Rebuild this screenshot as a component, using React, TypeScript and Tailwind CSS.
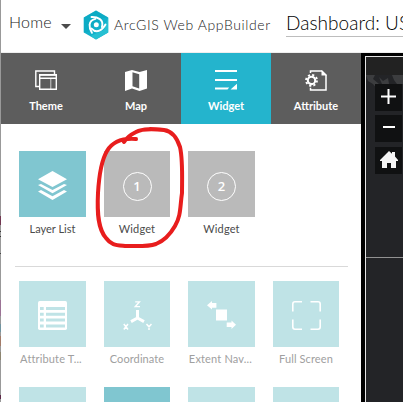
import React from 'react';

const Logo = () => (
  <svg width="26" height="30" viewBox="0 0 26 30" className="block">
    <path d="M13 0.6 25.2 7.5V22.5L13 29.4.8 22.5V7.5Z" fill="#12b1cb" />
    <path d="M25.2 7.5V22.5L13 29.4 7.5 26 21 20Z" fill="#27c0d2" />
    <path d="M.8 7.5 13 .6 25.2 7.5 20 8 5 22 .8 22.5Z" fill="#08a6bf" opacity=".55" />
    <g fill="none" stroke="#fff" strokeWidth="1.9" strokeLinecap="round">
      <path d="M8.5 7C14.5 6.8 21.3 9.5 18.9 17" />
      <path d="M8.5 7C14.5 6.8 21.3 9.5 18.9 17" transform="rotate(120 13.3 14.8)" />
      <path d="M8.5 7C14.5 6.8 21.3 9.5 18.9 17" transform="rotate(240 13.3 14.8)" />
    </g>
    <circle cx="13.3" cy="14.8" r="2.5" fill="#fff" />
  </svg>
);

const ThemeIcon = () => (
  <svg width="22" height="20" viewBox="0 0 22 20" fill="none" stroke="#fff">
    <path d="M4 16.5H.8V1H19.5V4" strokeWidth="1.4" />
    <path d="M4.7 4.7H21.3V19.3H4.7Z" strokeWidth="1.4" />
    <path d="M4 5H22M5 8.2H21" strokeWidth="1.5" />
    <path d="M15.8 9V19" strokeWidth="1" opacity=".7" />
  </svg>
);

const MapIcon = () => (
  <svg width="22" height="21" viewBox="0 0 22 21">
    <path d="M0 2 7 0 14.5 2 22 0V18.5L14.5 21 7 18.5 0 21Z" fill="#fff" />
    <path d="M7.5 2.3 14.2 4.3V18.6L7.5 16.2Z" fill="#5d5d5d" />
  </svg>
);

const WidgetIcon = () => (
  <svg width="22" height="20" viewBox="0 0 22 20" fill="#fff">
    <path d="M0 0H22V2H0ZM0 9H22V11H0ZM0 17.5H14.2L12.5 19.5H0ZM15.5 19.5 22 13.8V19.5Z" />
  </svg>
);

const AttributeIcon = () => (
  <svg width="22" height="21" viewBox="0 0 22 21">
    <path d="M5.5 3V1H16.8L21 5V20H5.5V17.8" fill="none" stroke="#fff" strokeWidth="1.5" />
    <path d="M16.5 0 22 5.4H16.5Z" fill="#fff" />
    <circle cx="6.5" cy="10.4" r="3.7" fill="none" stroke="#fff" strokeWidth="2.1" />
    <circle cx="6.5" cy="10.4" r="5.5" fill="none" stroke="#fff" strokeWidth="1.8" strokeDasharray="2.15 2.17" />
  </svg>
);

const LayersIcon = () => (
  <svg width="29" height="29" viewBox="0 0 29 29" fill="#fff">
    <path d="M14.5 0 29 8.3 14.5 16 0 8.3ZM0 14 3 12.9 14.5 19 26 12.9 29 14 14.5 22.3ZM0 20.5 3 19 14.5 25.2 26 19 29 20.5 14.5 29Z" />
  </svg>
);

const TableIcon = () => (
  <svg width="29" height="29" viewBox="0 0 29 29">
    <rect width="29" height="29" rx="1.7" fill="#fff" />
    <g fill="none" stroke="#bfe3e6" strokeWidth="3" strokeDasharray="3.7 2.3 19 9">
      <path d="M2 7.5H27" />
      <path d="M2 13.3H27" />
      <path d="M2 19.1H27" />
      <path d="M2 24.9H27" />
    </g>
  </svg>
);

const AxesIcon = () => (
  <svg width="29" height="29" viewBox="0 0 29 29" fill="none" stroke="#fff">
    <path d="M14.5 9V17M14.5 17 8 20.6M14.5 17 21 20.6" strokeWidth="3" />
    <path d="M12.2.8H16.5L12.2 5.7H17" strokeWidth="1.3" />
    <path d="M.8 23 5 28.5M5 23 .8 28.5M23.5 23 26 25.8 28.5 23M26 25.5V29" strokeWidth="1.5" />
  </svg>
);

const ExtentIcon = () => (
  <svg width="29" height="28" viewBox="0 0 29 28" fill="#fff">
    <path d="M9 8.6H20V19.6H9ZM0 4.3 5 0V2.1H9.4V6.7H5V8.6ZM29 23.8 24.5 19.5V21.6H19.7V26H24.5V28Z" />
  </svg>
);

const FullIcon = () => (
  <svg width="29" height="29" viewBox="0 0 29 29" fill="none" stroke="#fff" strokeWidth="1.6">
    <path d="M.8 10.5V3Q.8.8 3 .8H10M18.5.8H26Q28.2.8 28.2 3V10.5M28.2 18.5V26Q28.2 28.2 26 28.2H18.5M10 28.2H3Q.8 28.2.8 26V18.5" />
  </svg>
);

const Badge = ({ n }: { n: string }) => (
  <span className="mt-[3px] flex h-[29px] w-[29px] items-center justify-center rounded-full border border-white font-['Open_Sans',sans-serif] text-[13px] font-semibold leading-none text-white">
    {n}
  </span>
);

type TabProps = { icon: React.ReactNode; label: string; active?: boolean };
const Tab = ({ icon, label, active }: TabProps) => (
  <button className={`flex h-[71px] w-[90px] flex-col items-center pt-[17px] text-white ${active ? 'bg-[#24b4cd]' : 'bg-[#5d5d5d]'}`}>
    <span className="flex h-[21px] items-start">{icon}</span>
    <span className="mt-[8px] text-[11px] leading-[14px] font-bold">{label}</span>
  </button>
);

type TileProps = { icon?: React.ReactNode; label?: string; box: string; text?: string };
const Tile = ({ icon, label, box, text = 'text-[#4b4b4b]' }: TileProps) => (
  <div className="flex flex-col items-center">
    <div className={`flex h-[66px] w-full items-center justify-center pt-[2px] ${box}`}>{icon}</div>
    {label && <span className={`mt-[5px] whitespace-nowrap text-[11px] leading-[14px] ${text}`}>{label}</span>}
  </div>
);

const MapButton = ({ children }: { children: React.ReactNode }) => (
  <button className="flex h-[27px] w-[27px] items-center justify-center bg-[#101112]">{children}</button>
);

export default function App() {
  return (
    <div className="relative flex h-[402px] w-[403px] overflow-hidden bg-white font-['Lato',sans-serif]">
      <div className="flex w-px shrink-0 flex-col bg-[#999]">
        <div className="mt-[216px] h-[9px] bg-[#713751]" />
        <div className="mt-[6px] h-px bg-[#333]" />
        <div className="mt-[4px] h-px bg-[#333]" />
        <div className="mt-[16px] h-px bg-[#444]" />
        <div className="mt-[46px] h-[16px] bg-[#9b7395]" />
        <div className="mt-[8px] h-[8px] bg-[#7194a0]" />
        <div className="mt-[4px] h-[10px] bg-[#a37b68]" />
        <div className="mt-[6px] h-[8px] bg-[#8d8570]" />
        <div className="mt-[35px] h-[4px] bg-[#5c2847]" />
      </div>
      <div className="flex w-[402px] shrink-0 flex-col">
        <header className="flex h-[53px] shrink-0 items-start border-b border-[#eee] text-[#4b4b4b]">
          <span className="ml-[8px] mt-[12px] w-[43px] whitespace-nowrap text-[16px] leading-[20px] font-light tracking-[0.2px] text-[#222]">Home</span>
          <svg width="10" height="5" viewBox="0 0 10 5" className="ml-[9px] mt-[24px]">
            <path d="M0 0H10L5 5Z" fill="#4b4b4b" />
          </svg>
          <div className="ml-[12px] mt-[10px]"><Logo /></div>
          <span className="ml-[5px] mt-[15px] w-[160px] whitespace-nowrap text-[14px] leading-[20px] font-light tracking-[0.62px] text-[#222]">ArcGIS Web AppBuilder</span>
          <div className="ml-[12px] mt-[11px] h-[26px] w-[117px] overflow-hidden whitespace-nowrap border-b border-[#bdbdbd] text-[19px] leading-[24px] font-light tracking-[0.05px] text-black">
            Dashboard: US
          </div>
        </header>
        <div className="flex h-[349px]">
          <section className="w-[360px] shrink-0">
            <nav className="flex">
              <Tab icon={<ThemeIcon />} label="Theme" />
              <Tab icon={<MapIcon />} label="Map" />
              <Tab icon={<WidgetIcon />} label="Widget" active />
              <Tab icon={<AttributeIcon />} label="Attribute" />
            </nav>
            <div className="grid grid-cols-[67px_66px_67px_66px] gap-x-[18px] pl-[18px] pt-[27px]">
              <Tile icon={<LayersIcon />} label="Layer List" box="bg-[#80c6d0]" />
              <Tile icon={<Badge n="1" />} label="Widget" box="bg-[#bababa]" text="text-[#4b4b4b] tracking-[0.15px]" />
              <Tile icon={<Badge n="2" />} label="Widget" box="bg-[#bababa]" text="text-[#4b4b4b] tracking-[0.15px]" />
            </div>
            <div className="ml-[14px] mt-[30px] h-px w-[333px] bg-[#d9d9d9]" />
            <div className="grid grid-cols-[67px_66px_67px_66px] gap-x-[18px] gap-y-[21px] pl-[18px] pt-[14px]">
              <Tile icon={<TableIcon />} label="Attribute T..." box="bg-[#bfe3e6]" text="text-[#a0a0a0] tracking-[0.15px] mr-[3px]" />
              <Tile icon={<AxesIcon />} label="Coordinate" box="bg-[#bfe3e6]" text="text-[#a0a0a0] tracking-[0.1px]" />
              <Tile icon={<ExtentIcon />} label="Extent Nav..." box="bg-[#bfe3e6]" text="text-[#a0a0a0] tracking-[0.17px] mr-[2px]" />
              <Tile icon={<FullIcon />} label="Full Screen" box="bg-[#bfe3e6]" text="text-[#a0a0a0] tracking-[0.12px]" />
              <Tile box="bg-[#bfe3e6]" />
              <Tile box="bg-[#80c6d0]" />
              <Tile box="bg-[#bfe3e6]" />
              <Tile box="bg-[#bfe3e6]" />
            </div>
          </section>
          <section className="w-[42px] bg-black pl-[4px] pt-[3px]">
            <div className="flex h-[346px] flex-col border-l border-t border-[#e5e5e5] bg-[#232427]">
              <div className="h-[18px] shrink-0 bg-[#222]" />
              <div className="relative flex h-[183px] shrink-0 flex-col border-b border-[#929292] pl-[9px] pt-[9px]">
                <svg className="absolute left-0 top-0" width="37" height="25" viewBox="0 0 37 25">
                  <path d="M0 0H9L7 4 13 9V16L7 9 2 6ZM13 2 17 6 22 3 23 9H16ZM26 0H37V9H31L28 5Z" fill="#4a4b4d" opacity=".65" />
                </svg>
                <div className="relative flex flex-col">
                  <MapButton>
                    <svg width="15" height="15" viewBox="0 0 15 15" className="mb-[2px]"><path d="M0 7.5H15M7.5 0V15" stroke="#fff" strokeWidth="2" /></svg>
                  </MapButton>
                  <div className="mt-[4px] flex flex-col gap-[5px]">
                    <MapButton>
                      <svg width="12" height="2" viewBox="0 0 12 2" className="mb-[3px]"><path d="M0 1H12" stroke="#fff" strokeWidth="2" /></svg>
                    </MapButton>
                    <MapButton>
                      <svg width="18" height="17" viewBox="0 0 18 17" className="mb-[2px]"><path d="M9 0 12 2.7V1H15V5.5L18 9V10H16V17H11V12H7V17H2V10H0V9Z" fill="#f5f5f5" /></svg>
                    </MapButton>
                  </div>
                </div>
              </div>
            </div>
          </section>
        </div>
      </div>
      <svg className="pointer-events-none absolute left-0 top-0" width="403" height="402" viewBox="0 0 403 402">
        <path
          d="M136 139C123 138 113 141 107 151C101 161 99 176 98 193C97 213 98 229 106 238C111 245 116 245 125 246C137 246 147 247 156 244C166 240 171 233 175 226C181 216 180 207 182 193C182 179 183 160 180 147C177 138 172 131 164 130C154 129 143 128 136 132C130 135 127 137 124 142"
          fill="none" stroke="#e81d1d" strokeWidth="4" strokeLinecap="round" strokeLinejoin="round"
        />
      </svg>
    </div>
  );
}
